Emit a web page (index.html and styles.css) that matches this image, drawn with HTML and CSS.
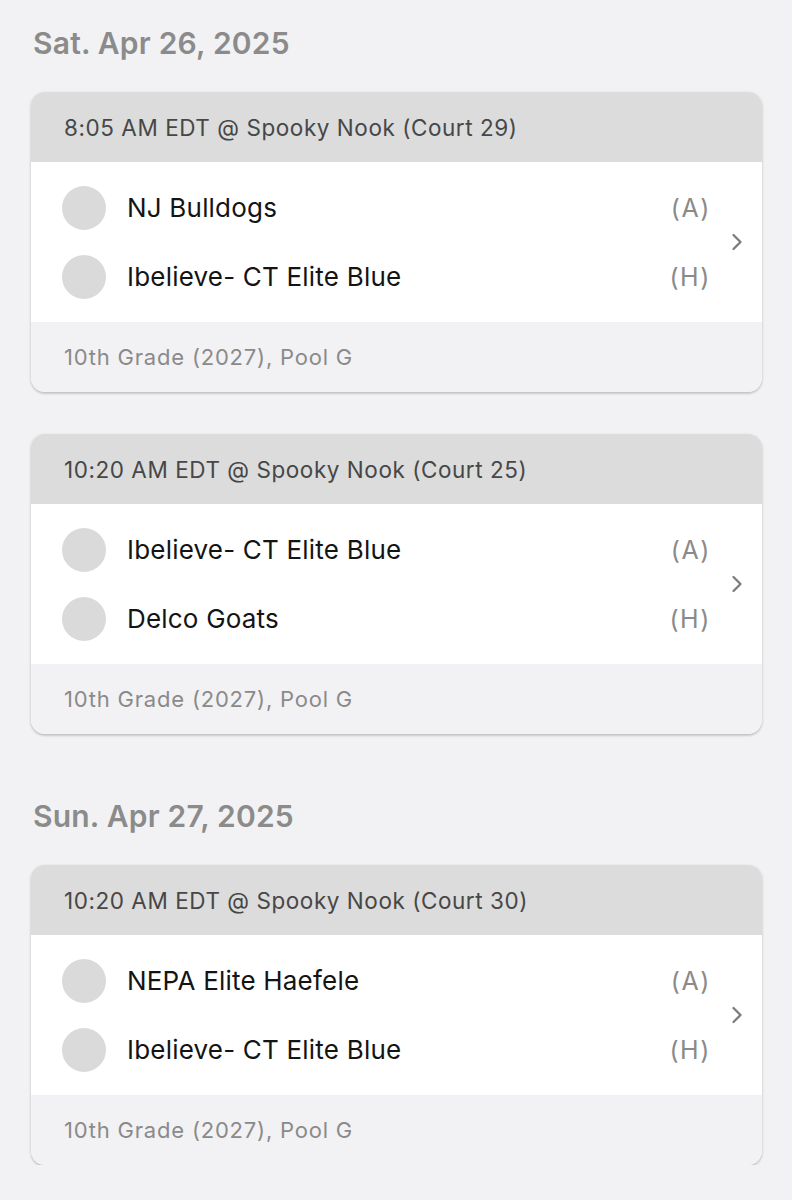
FILE: index.html
```html
<!DOCTYPE html>
<html>
<head>
<meta charset="utf-8">
<link rel="stylesheet" href="styles.css">
</head>
<body>
<main class="page">
  <section class="day">
    <h2 class="day-title">Sat. Apr 26, 2025</h2>
    <div class="card">
      <div class="card-head">8:05 AM EDT @ Spooky Nook (Court 29)</div>
      <div class="card-body">
        <div class="teams">
          <div class="team"><span class="logo"></span><span class="name">NJ Bulldogs</span><span class="side">(A)</span></div>
          <div class="team"><span class="logo"></span><span class="name">Ibelieve- CT Elite Blue</span><span class="side">(H)</span></div>
        </div>
        <svg class="chev" width="14" height="20" viewBox="0 0 14 20"><path d="M2.5 3 L9.5 10 L2.5 17" fill="none" stroke="#7c7c7c" stroke-width="2.3" stroke-linecap="round" stroke-linejoin="round"/></svg>
      </div>
      <div class="card-foot">10th Grade (2027), Pool G</div>
    </div>
    <div class="card">
      <div class="card-head">10:20 AM EDT @ Spooky Nook (Court 25)</div>
      <div class="card-body">
        <div class="teams">
          <div class="team"><span class="logo"></span><span class="name">Ibelieve- CT Elite Blue</span><span class="side">(A)</span></div>
          <div class="team"><span class="logo"></span><span class="name">Delco Goats</span><span class="side">(H)</span></div>
        </div>
        <svg class="chev" width="14" height="20" viewBox="0 0 14 20"><path d="M2.5 3 L9.5 10 L2.5 17" fill="none" stroke="#7c7c7c" stroke-width="2.3" stroke-linecap="round" stroke-linejoin="round"/></svg>
      </div>
      <div class="card-foot">10th Grade (2027), Pool G</div>
    </div>
  </section>
  <section class="day">
    <h2 class="day-title">Sun. Apr 27, 2025</h2>
    <div class="card">
      <div class="card-head">10:20 AM EDT @ Spooky Nook (Court 30)</div>
      <div class="card-body">
        <div class="teams">
          <div class="team"><span class="logo"></span><span class="name">NEPA Elite Haefele</span><span class="side">(A)</span></div>
          <div class="team"><span class="logo"></span><span class="name">Ibelieve- CT Elite Blue</span><span class="side">(H)</span></div>
        </div>
        <svg class="chev" width="14" height="20" viewBox="0 0 14 20"><path d="M2.5 3 L9.5 10 L2.5 17" fill="none" stroke="#7c7c7c" stroke-width="2.3" stroke-linecap="round" stroke-linejoin="round"/></svg>
      </div>
      <div class="card-foot">10th Grade (2027), Pool G</div>
    </div>
  </section>
</main>
</body>
</html>
```
FILE: styles.css
```css
html, body {
  margin: 0;
  padding: 0;
  background: #f2f2f4;
}
body {
  font-family: Inter, "Noto Sans", sans-serif;
  color: #1c1c1c;
}
.page {
  padding: 25px 30px 0 31px;
  display: flex;
  flex-direction: column;
  gap: 64px;
}
.day {
  display: flex;
  flex-direction: column;
  gap: 42px;
}
.day-title {
  margin: 0 0 -11px 2px;
  font-size: 30px;
  line-height: 36px;
  font-weight: 600;
  color: #8b8b8b;
  letter-spacing: 0.2px;
}
.card {
  border-radius: 14px;
  overflow: hidden;
  background: #f2f2f4;
  box-shadow: 0 1px 3px rgba(0,0,0,0.18), 0 2px 2px rgba(0,0,0,0.08);
}
.card-head {
  height: 70px;
  display: flex;
  align-items: center;
  padding-left: 33px;
  background: #dcdcdc;
  color: #474747;
  font-size: 22.5px;
  letter-spacing: 0.55px;
}
.card-body {
  height: 160px;
  background: #ffffff;
  display: flex;
  align-items: center;
  padding: 0 17px 0 31px;
}
.teams {
  flex: 1;
  display: flex;
  flex-direction: column;
  gap: 25px;
}
.team {
  display: flex;
  align-items: center;
  height: 44px;
}
.logo {
  width: 44px;
  height: 44px;
  border-radius: 50%;
  background: #dadada;
  flex: none;
}
.name {
  flex: 1;
  margin-left: 21px;
  font-size: 26px;
  color: #141414;
  letter-spacing: 0.2px;
}
.side {
  font-size: 25px;
  color: #8a8a8a;
  margin-right: 20px;
  letter-spacing: 1.6px;
}
.chev {
  flex: none;
}
.card-foot {
  height: 70px;
  display: flex;
  align-items: center;
  padding-left: 33px;
  background: #f2f2f4;
  color: #8a8a8a;
  font-size: 22px;
  letter-spacing: 0.8px;
}
```
